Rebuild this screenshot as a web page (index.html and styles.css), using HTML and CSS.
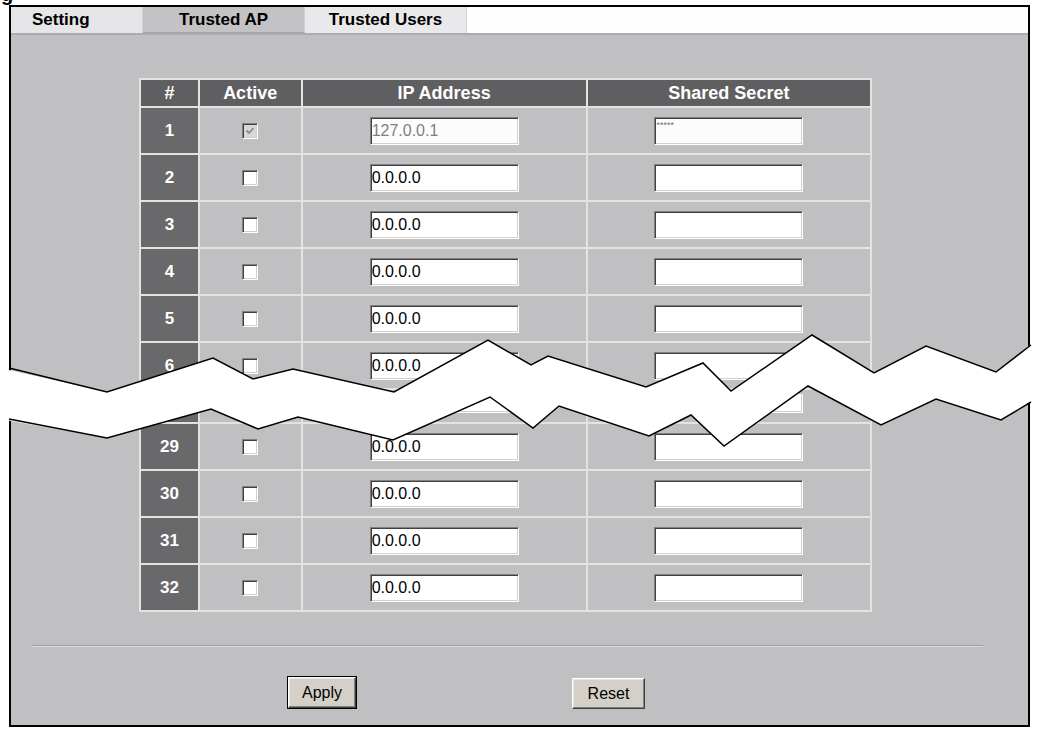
FILE: index.html
```html
<!doctype html>
<html lang="en">
<head>
    <meta charset="UTF-8">
    <title>Trusted AP</title>
    <link rel="stylesheet" href="styles.css">
</head>
<body>

    <div class="caption"><span>g</span></div>

    <div class="frame">
        <div class="tabs">
            <div class="tab tab-first">Setting</div>
            <div class="tab tab-active">Trusted AP</div>
            <div class="tab">Trusted Users</div>
            <div class="tabs-rest"></div>
        </div>

        <div class="content">
            <table class="ap-table">
                <tr>
                    <th class="col-num">#</th>
                    <th class="col-active">Active</th>
                    <th class="col-ip">IP Address</th>
                    <th class="col-secret">Shared Secret</th>
                </tr>
                <tr>
                    <td class="num">1</td>
                    <td><span class="check check-on"><svg viewBox="0 0 12 12" width="12" height="12"><polyline points="2.5,5.5 5,8 9.5,3" fill="none" stroke="#8a8a8a" stroke-width="1.8"/></svg></span></td>
                    <td><input class="field" type="text" value="127.0.0.1" disabled></td>
                    <td><input class="field secret" type="text" value="*****" disabled></td>
                </tr>
                <tr>
                    <td class="num">2</td>
                    <td><span class="check"></span></td>
                    <td><input class="field" type="text" value="0.0.0.0"></td>
                    <td><input class="field" type="text" value=""></td>
                </tr>
                <tr>
                    <td class="num">3</td>
                    <td><span class="check"></span></td>
                    <td><input class="field" type="text" value="0.0.0.0"></td>
                    <td><input class="field" type="text" value=""></td>
                </tr>
                <tr>
                    <td class="num">4</td>
                    <td><span class="check"></span></td>
                    <td><input class="field" type="text" value="0.0.0.0"></td>
                    <td><input class="field" type="text" value=""></td>
                </tr>
                <tr>
                    <td class="num">5</td>
                    <td><span class="check"></span></td>
                    <td><input class="field" type="text" value="0.0.0.0"></td>
                    <td><input class="field" type="text" value=""></td>
                </tr>
                <tr>
                    <td class="num">6</td>
                    <td><span class="check"></span></td>
                    <td><input class="field" type="text" value="0.0.0.0"></td>
                    <td><input class="field" type="text" value=""></td>
                </tr>
                <!-- rows 7 - 28 are left out, only the bottom edge of one shows -->
                <tr class="cut">
                    <td class="num"></td>
                    <td></td>
                    <td><input class="field" type="text" value=""></td>
                    <td><input class="field" type="text" value=""></td>
                </tr>
                <tr>
                    <td class="num">29</td>
                    <td><span class="check"></span></td>
                    <td><input class="field" type="text" value="0.0.0.0"></td>
                    <td><input class="field" type="text" value=""></td>
                </tr>
                <tr>
                    <td class="num">30</td>
                    <td><span class="check"></span></td>
                    <td><input class="field" type="text" value="0.0.0.0"></td>
                    <td><input class="field" type="text" value=""></td>
                </tr>
                <tr>
                    <td class="num">31</td>
                    <td><span class="check"></span></td>
                    <td><input class="field" type="text" value="0.0.0.0"></td>
                    <td><input class="field" type="text" value=""></td>
                </tr>
                <tr>
                    <td class="num">32</td>
                    <td><span class="check"></span></td>
                    <td><input class="field" type="text" value="0.0.0.0"></td>
                    <td><input class="field" type="text" value=""></td>
                </tr>
            </table>

            <div class="divider"></div>

            <div class="buttons">
                <button class="btn btn-default" type="button">Apply</button>
                <button class="btn" type="button">Reset</button>
            </div>
        </div>
    </div>

    <!-- torn band across the list -->
    <svg class="break" width="1037" height="731" viewBox="0 0 1037 731">
        <polygon fill="#fff" points="0,368 107,392 213,358 253,379 293,369 394,392 488,340 531,365 548,356 646,387 703,363 731,391 812,335 874,373 926,346 996,372 1030,345 1037,345 1037,402 1030,402 1001,420 936,399 881,425 808,386 724,446 691,415 649,436 559,406 533,428 490,397 393,440 298,417 258,429 211,409 107,438 0,419"/>
        <polyline fill="none" stroke="#000" stroke-width="1.5" points="9,368 107,392 213,358 253,379 293,369 394,392 488,340 531,365 548,356 646,387 703,363 731,391 812,335 874,373 926,346 996,372 1031,345"/>
        <polyline fill="none" stroke="#000" stroke-width="1.5" points="9,419 107,438 211,409 258,429 298,417 393,440 490,397 533,428 559,406 649,436 691,415 724,446 808,386 881,425 936,399 1001,420 1031,402"/>
    </svg>

</body>
</html>
```

FILE: styles.css
```css
*,*:before,*:after{
    box-sizing: border-box;
    font-family: 'Liberation Sans', Arial, sans-serif;
}
body{
    position: relative;
    margin: 0;
    padding: 0;
    width: 1037px;
    height: 731px;
    background: #fff;
    overflow: hidden;
}
.caption{
    height: 5px;
    overflow: hidden;
}
.caption span{
    display: block;
    margin: -16px 0 0 1px;
    font-size: 20px;
    line-height: 20px;
    font-weight: bold;
    color: #000;
}
.frame{
    margin-left: 9px;
    width: 1021px;
    height: 722px;
    border: 2px solid #000;
    background: #c0bfc1;
}
.tabs{
    display: flex;
    height: 28px;
    border-bottom: 2px solid #acabad;
}
.tab{
    width: 162px;
    height: 26px;
    line-height: 26px;
    font-size: 17px;
    font-weight: bold;
    color: #000;
    text-align: center;
    background: #e9e8ea;
    border-right: 1px solid #d2d1d3;
}
.tab-first{
    width: 132px;
    padding-left: 21px;
    text-align: left;
    background: #e6e5e7;
}
.tab-active{
    background: #c3c2c4;
    border-bottom: 1px solid #a6a5a7;
}
.tabs-rest{
    flex: 1;
    height: 26px;
    background: #fefefe;
}
.content{
    padding-top: 43px;
}
.ap-table{
    margin-left: 128px;
    width: 733px;
    border-collapse: collapse;
}
.ap-table th,
.ap-table td{
    border: 2px solid #e3e3e4;
    padding: 0;
    text-align: center;
}
.ap-table th{
    height: 28px;
    font-size: 18px;
    font-weight: bold;
    color: #fff;
    background: #5f5e60;
}
.col-num{ width: 59px; }
.col-active{ width: 103px; }
.col-ip{ width: 286px; }
.col-secret{ width: 285px; }
.ap-table td{
    height: 47px;
    background: #c0bfc1;
}
.ap-table td.num{
    font-size: 17px;
    font-weight: bold;
    color: #fff;
    background: #69686a;
}
.ap-table tr.cut td{
    height: 34px;
    vertical-align: bottom;
    padding-bottom: 9px;
}
.check{
    display: inline-block;
    vertical-align: middle;
    width: 16px;
    height: 16px;
    background: #fff;
    border: 1px solid;
    border-color: #808080 #fff #fff #808080;
    box-shadow: inset 1px 1px #404040, inset -1px -1px #d4d0c8;
    position: relative;
}
.check-on{
    background: #d8d7d9;
}
.check svg{
    position: absolute;
    left: 1px;
    top: 1px;
}
.field{
    width: 149px;
    height: 28px;
    margin: 0;
    padding: 0 1px;
    vertical-align: middle;
    font-size: 16px;
    color: #000;
    background: #fff;
    border: 1px solid;
    border-color: #808080 #fff #fff #808080;
    box-shadow: inset 1px 1px #404040, inset -1px -1px #d4d0c8;
    outline: none;
}
.field:disabled{
    color: #808080;
    background: #fcfcfc;
}
.field.secret{
    font-size: 9px;
    padding-bottom: 12px;
    color: #707070;
}
.cut .field{
    height: 19px;
    border-top: 0;
    box-shadow: inset -1px -1px #d4d0c8;
}
.divider{
    margin: 33px 0 0 21px;
    width: 951px;
    border-top: 1px solid #9d9c9e;
    border-bottom: 1px solid #dcdbdd;
}
.buttons{
    display: flex;
    align-items: flex-start;
    gap: 216px;
    margin-top: 30px;
    padding-left: 277px;
}
.btn{
    height: 31px;
    padding: 0 8px;
    font-size: 16px;
    color: #000;
    background: #d4d0c8;
    border: 1px solid;
    border-color: #fff #404040 #404040 #fff;
    box-shadow: inset -1px -1px #808080, inset 1px 1px #e8e6e0;
}
.btn-default{
    width: 68px;
    outline: 1px solid #000;
}
.btn + .btn{
    width: 73px;
    margin-top: 1px;
}
.break{
    position: absolute;
    left: 0;
    top: 0;
    pointer-events: none;
}
```
